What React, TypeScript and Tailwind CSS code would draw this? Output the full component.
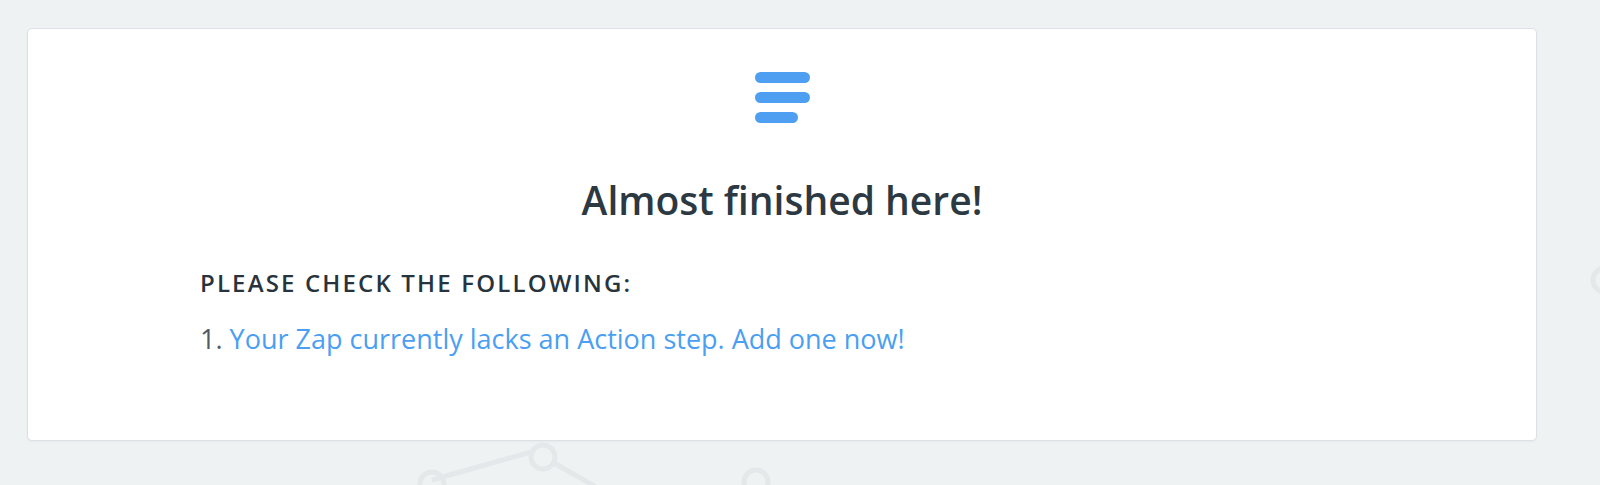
import React from "react";

function Decor() {
  return (
    <svg className="absolute inset-0 pointer-events-none" width="1600" height="485" viewBox="0 0 1600 485">
      <g fill="none" stroke="#e4e8eb" strokeWidth="5">
        <line x1="432" y1="480" x2="531" y2="452" />
        <line x1="554" y1="463" x2="610" y2="495" />
        <circle cx="543" cy="457" r="12" />
        <circle cx="432" cy="484" r="12" />
        <circle cx="756" cy="482" r="12" />
        <circle cx="1605" cy="280" r="12" />
      </g>
    </svg>
  );
}

export default function App() {
  return (
    <div
      className="relative w-[1600px] h-[485px] overflow-hidden bg-[#eef2f3]"
      style={{ fontFamily: '"Open Sans", "Noto Sans", sans-serif' }}
    >
      <Decor />
      <div className="relative pl-[27px] pt-[28px]">
        <div className="w-[1510px] h-[413px] bg-white rounded-[5px] border border-[#dde1e5] shadow-[0_1px_2px_rgba(0,0,0,0.04)] flex flex-col">
          <div className="flex justify-center pt-[43px]">
            <svg width="55" height="52" viewBox="0 0 55 52">
              <rect x="0" y="0" width="55" height="11" rx="5.5" fill="#4e9ff1" />
              <rect x="0" y="20" width="55" height="11" rx="5.5" fill="#4e9ff1" />
              <rect x="0" y="40" width="43" height="11" rx="5.5" fill="#4e9ff1" />
            </svg>
          </div>
          <h1 className="mt-[53px] text-center text-[39px] leading-[46px] font-semibold text-[#2c3942]">
            Almost finished here!
          </h1>
          <div className="pl-[172px] mt-[45px]">
            <div className="text-[24px] leading-[30px] font-semibold tracking-[0.09em] text-[#27343d]">
              PLEASE CHECK THE FOLLOWING:
            </div>
            <ol className="mt-[23px] text-[27px] leading-[36px] text-[#525b63]">
              <li>
                1. <a className="text-[#4a9ff2]">Your Zap currently lacks an Action step. Add one now!</a>
              </li>
            </ol>
          </div>
        </div>
      </div>
    </div>
  );
}
